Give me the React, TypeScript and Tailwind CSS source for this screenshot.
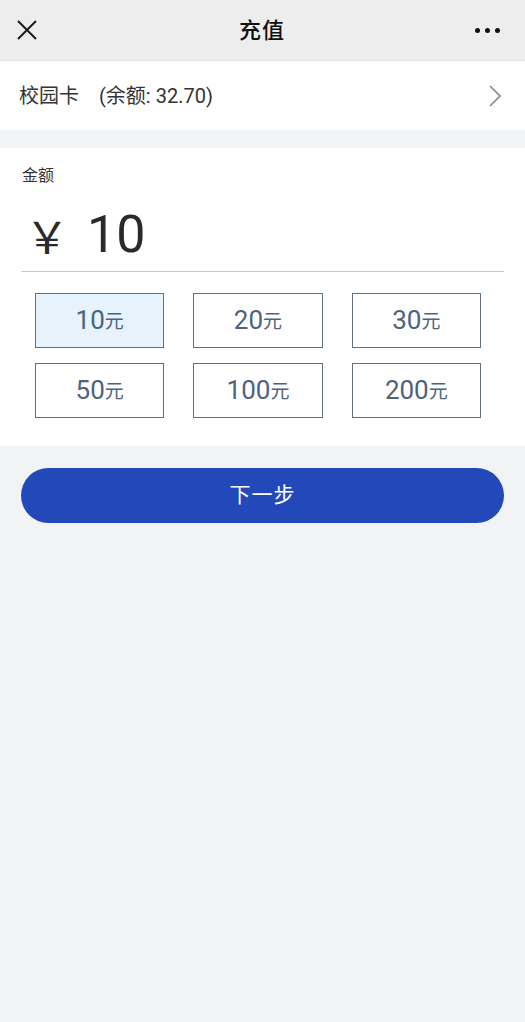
import React, { useState } from 'react';

const amounts = [10, 20, 30, 50, 100, 200];

export default function App() {
  const [selected, setSelected] = useState(10);

  return (
    <div className="min-h-[1022px] w-full bg-[#f2f3f5] font-['Roboto','Noto_Sans_CJK_SC',sans-serif] text-[#222]">
      {/* header */}
      <div className="h-[61px] bg-[#ededed] flex items-center justify-between px-[17px] border-b border-[#e2e2e2]">
        <svg width="20" height="20" viewBox="0 0 20 20" className="text-[#1a1a1a]">
          <path d="M1 1 L19 19 M19 1 L1 19" stroke="currentColor" strokeWidth="2" fill="none" />
        </svg>
        <span className="text-[22px] font-medium text-[#111] tracking-[1px] pl-[12px]">充值</span>
        <div className="flex items-center gap-[5px] pr-[8px]">
          <span className="w-[5px] h-[5px] rounded-full bg-[#111]" />
          <span className="w-[5px] h-[5px] rounded-full bg-[#111]" />
          <span className="w-[5px] h-[5px] rounded-full bg-[#111]" />
        </div>
      </div>

      {/* card row */}
      <div className="h-[69px] bg-white flex items-center justify-between pl-[19px] pr-[24px]">
        <span className="text-[20px] text-[#333]">
          校园卡<span className="ml-[20px]">(余额: 32.70)</span>
        </span>
        <svg width="12" height="22" viewBox="0 0 12 22">
          <path d="M1 1 L11 11 L1 21" stroke="#8a8a8a" strokeWidth="1.6" fill="none" />
        </svg>
      </div>

      {/* amount section */}
      <div className="mt-[18px] bg-white pt-[16px] pb-[28px]">
        <div className="px-[21px]">
          <div className="text-[16px] text-[#333] pl-[1px]">金额</div>
          <div className="flex items-center h-[84px] pt-[10px] pl-[4px] border-b border-[#c8c8c8] text-[#2a2a2a]">
            <span className="text-[44px] leading-none font-['Noto_Sans_CJK_SC',sans-serif]">￥</span>
            <span className="text-[52px] leading-none ml-[18px]">10</span>
          </div>
        </div>
        <div className="grid grid-cols-3 gap-x-[29px] gap-y-[15px] pl-[35px] pr-[44px] mt-[21px]">
          {amounts.map((a) => (
            <button
              key={a}
              onClick={() => setSelected(a)}
              className={`h-[55px] border-[1.5px] border-[#5d7088] flex items-center justify-center text-[#4e6280] ${
                selected === a ? 'bg-[#e6f3fd]' : 'bg-white'
              }`}
            >
              <span className="text-[26px]">{a}</span>
              <span className="text-[19px] mt-[4px]">元</span>
            </button>
          ))}
        </div>
      </div>

      {/* next button */}
      <div className="px-[21px] pt-[22px]">
        <button className="w-full h-[55px] rounded-full bg-[#2348b9] text-white text-[21px] tracking-wider">
          下一步
        </button>
      </div>
    </div>
  );
}
